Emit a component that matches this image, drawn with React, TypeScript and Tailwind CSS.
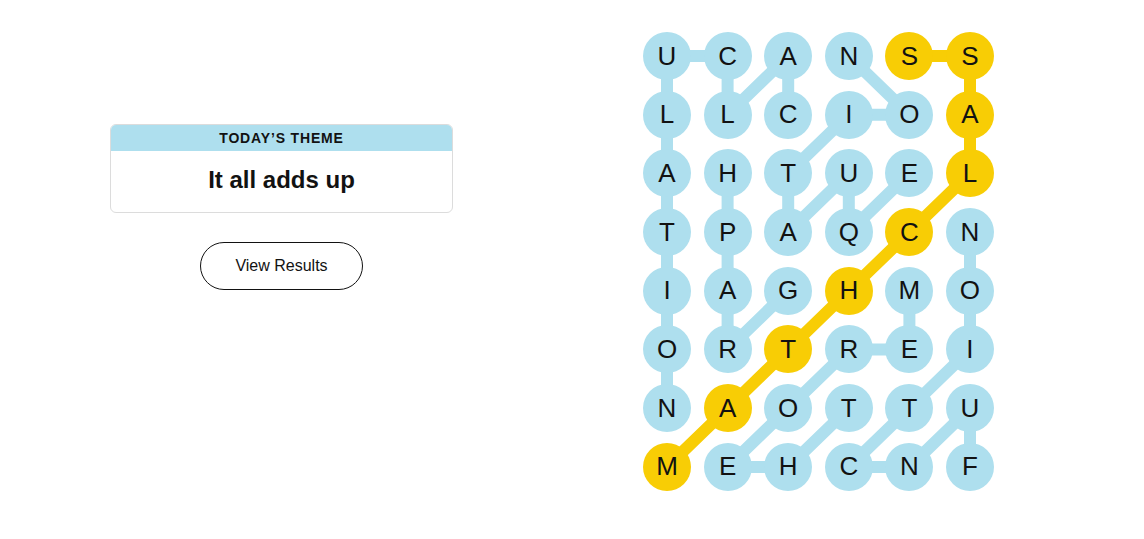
import React from "react";

const LETTERS = [
  "UCANSS",
  "LLCIOA",
  "AHTUEL",
  "TPAQCN",
  "IAGHMO",
  "ORTREI",
  "NAOTTU",
  "MEHCNF",
];

const YELLOW = new Set(["0,4", "0,5", "1,5", "2,5", "3,4", "4,3", "5,2", "6,1", "7,0"]);

type P = [number, number];
const BLUE_PATHS: P[][] = [
  // CALCULATION
  [[1, 2], [0, 2], [1, 1], [0, 1], [0, 0], [1, 0], [2, 0], [3, 0], [4, 0], [5, 0], [6, 0]],
  // EQUATION
  [[2, 4], [3, 3], [2, 3], [3, 2], [2, 2], [1, 3], [1, 4], [0, 3]],
  // GRAPH
  [[4, 2], [5, 1], [4, 1], [3, 1], [2, 1]],
  // THEOREM
  [[6, 3], [7, 2], [7, 1], [6, 2], [5, 3], [5, 4], [4, 4]],
  // FUNCTION
  [[7, 5], [6, 5], [7, 4], [7, 3], [6, 4], [5, 5], [4, 5], [3, 5]],
];
const YELLOW_PATH: P[] = [[0, 4], [0, 5], [1, 5], [2, 5], [3, 4], [4, 3], [5, 2], [6, 1], [7, 0]];

const CX = (c: number) => 24 + c * 60.6;
const CY = (r: number) => 24 + r * 58.7;

function pathD(p: P[]) {
  return p.map(([r, c], i) => `${i === 0 ? "M" : "L"}${CX(c)} ${CY(r)}`).join(" ");
}

export default function App() {
  return (
    <div
      className="flex w-[1144px] h-[539px] bg-white text-black"
      style={{ fontFamily: '"Liberation Sans", Arial, sans-serif' }}
    >
      <div className="w-[563px] flex flex-col items-center pt-[124px]">
        <div className="w-[343px] border border-[#dcdcdc] rounded-[6px] overflow-hidden">
          <div className="h-[26px] bg-[#aedfee] flex items-center justify-center text-[14px] font-bold tracking-[0.06em] text-[#121212]">
            TODAY’S THEME
          </div>
          <div className="h-[61px] flex items-center justify-center pb-[3px] text-[24px] font-bold text-[#121212]">
            It all adds up
          </div>
        </div>
        <button className="mt-[29px] w-[163px] h-[48px] rounded-full border border-[#121212] text-[16px] text-[#121212] bg-white">
          View Results
        </button>
      </div>
      <div className="ml-[80px] pt-[32px]">
        <div className="relative">
          <svg className="absolute left-0 top-0" width="352" height="460" viewBox="0 0 352 460">
            {BLUE_PATHS.map((p, i) => (
              <path key={i} d={pathD(p)} fill="none" stroke="#aedfee" strokeWidth="12" strokeLinejoin="round" />
            ))}
            <path d={pathD(YELLOW_PATH)} fill="none" stroke="#f8cd05" strokeWidth="12" strokeLinejoin="round" />
          </svg>
          <div className="relative grid grid-cols-[repeat(6,48px)] gap-x-[12.6px] gap-y-[10.7px]">
            {LETTERS.map((row, r) =>
              row.split("").map((ch, c) => (
                <div
                  key={`${r}-${c}`}
                  className={`w-[48px] h-[48px] rounded-full flex items-center justify-center text-[26px] text-[#121212] ${
                    YELLOW.has(`${r},${c}`) ? "bg-[#f8cd05]" : "bg-[#aedfee]"
                  }`}
                >
                  {ch}
                </div>
              ))
            )}
          </div>
        </div>
      </div>
    </div>
  );
}
